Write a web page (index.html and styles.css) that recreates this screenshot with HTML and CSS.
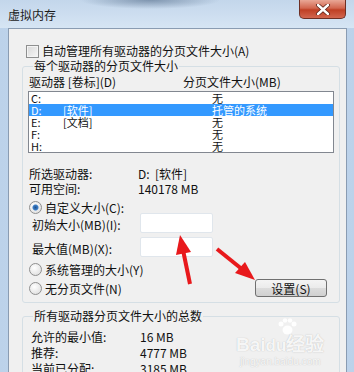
FILE: index.html
```html
<!DOCTYPE html>
<html lang="zh-CN">
<head>
    <meta charset="UTF-8">
    <title>虚拟内存</title>
    <link rel="stylesheet" href="styles.css">
</head>
<body>

    <div class="window">
        <div class="titlebar">
            <span class="title">虚拟内存</span>
            <div class="close-btn">
                <svg width="16" height="11" viewBox="0 0 16 11">
                    <path d="M3 1 L13 10 M13 1 L3 10" stroke="#5a2016" stroke-width="4" stroke-linecap="round"/>
                    <path d="M3 1 L13 10 M13 1 L3 10" stroke="#ffffff" stroke-width="2.4" stroke-linecap="round"/>
                </svg>
            </div>
        </div>

        <div class="content">
            <div class="check-row">
                <span class="checkbox"></span>
                <span>自动管理所有驱动器的分页文件大小(A)</span>
            </div>

            <!-- 每个驱动器 -->
            <fieldset class="group">
                <legend>每个驱动器的分页文件大小</legend>
                <div class="list-head">
                    <span>驱动器 [卷标](D)</span>
                    <span>分页文件大小(MB)</span>
                </div>
                <div class="listbox">
                    <div class="list-row"><span>C:</span><span></span><span>无</span></div>
                    <div class="list-row selected"><span>D:</span><span>[软件]</span><span>托管的系统</span></div>
                    <div class="list-row"><span>E:</span><span>[文档]</span><span>无</span></div>
                    <div class="list-row"><span>F:</span><span></span><span>无</span></div>
                    <div class="list-row"><span>H:</span><span></span><span>无</span></div>
                </div>

                <div class="info-rows">
                    <div class="info-row"><span>所选驱动器:</span><span>D:  [软件]</span></div>
                    <div class="info-row"><span>可用空间:</span><span>140178 MB</span></div>
                </div>

                <div class="radio-row first">
                    <span class="radio checked"></span>
                    <span>自定义大小(C):</span>
                </div>
                <div class="input-row initial">
                    <span>初始大小(MB)(I):</span>
                    <span class="textbox"></span>
                </div>
                <div class="input-row">
                    <span>最大值(MB)(X):</span>
                    <span class="textbox"></span>
                </div>
                <div class="radio-row system">
                    <span class="radio"></span>
                    <span>系统管理的大小(Y)</span>
                </div>
                <div class="radio-row last">
                    <div class="radio-label">
                        <span class="radio"></span>
                        <span>无分页文件(N)</span>
                    </div>
                    <button class="set-btn">设置(S)</button>
                </div>
            </fieldset>

            <!-- 总数 -->
            <fieldset class="group total">
                <legend>所有驱动器分页文件大小的总数</legend>
                <div class="total-row"><span>允许的最小值:</span><span>16 MB</span></div>
                <div class="total-row"><span>推荐:</span><span>4777 MB</span></div>
                <div class="total-row"><span>当前已分配:</span><span>3185 MB</span></div>
            </fieldset>
        </div>

        <div class="watermark">
            <svg class="wm-paw" width="22" height="18" viewBox="0 0 22 18">
                <circle cx="5" cy="6" r="2.5" fill="rgba(255,255,255,0.9)"/>
                <circle cx="9" cy="2.5" r="2.3" fill="rgba(255,255,255,0.9)"/>
                <circle cx="14" cy="2.5" r="2.3" fill="rgba(255,255,255,0.9)"/>
                <circle cx="18" cy="6" r="2.5" fill="rgba(255,255,255,0.9)"/>
                <ellipse cx="11.5" cy="12" rx="5" ry="4.5" fill="rgba(255,255,255,0.9)"/>
            </svg>
            <div class="wm-logo">Bai<span class="wm-du">du</span>经验</div>
            <div class="wm-url">jingyan.baidu.com</div>
        </div>

        <svg class="arrows" width="354" height="372" viewBox="0 0 354 372">
            <line x1="190" y1="284" x2="183" y2="250" stroke="#e8191c" stroke-width="4"/>
            <polygon points="180,235 191,252 176,255" fill="#e8191c"/>
            <line x1="217" y1="249" x2="243" y2="270" stroke="#e8191c" stroke-width="4"/>
            <polygon points="255,280 245,262 235,273" fill="#e8191c"/>
        </svg>
    </div>

</body>
</html>
```

FILE: styles.css
```css
body {
    margin: 0;
    font-family: "Noto Sans CJK SC", "Liberation Sans", sans-serif;
    font-size: 12px;
    color: #111;
    overflow: hidden;
}

.window {
    position: relative;
    width: 354px;
    height: 372px;
    padding: 0 7px 0 8px;
    box-sizing: border-box;
    background: linear-gradient(to right, #bcd2ea, #cfe0f2 50%, #bcd2ea);
    overflow: hidden;
}

.titlebar {
    display: flex;
    align-items: flex-start;
    justify-content: space-between;
    height: 28px;
    margin: 0 -7px 0 -8px;
    padding: 0 7px 0 8px;
    background:
        radial-gradient(ellipse 70px 9px at 150px 0, rgba(70, 95, 125, 0.55), transparent),
        linear-gradient(#c3d6eb, #d6e5f4);
}

.title {
    line-height: 30px;
    color: #1b1b1b;
}

.close-btn {
    display: flex;
    align-items: center;
    justify-content: center;
    width: 45px;
    height: 18px;
    margin-right: 1px;
    border: 1px solid #6e2f24;
    border-top: none;
    border-radius: 0 0 5px 5px;
    background: linear-gradient(#e9a796, #d2664f 45%, #bf3f24 55%, #d2664f);
}

.content {
    height: 400px;
    border: 1px solid #8a9cb2;
    border-bottom: none;
    background: #f0f0f0;
    padding-top: 15px;
}

.check-row {
    display: flex;
    align-items: center;
    height: 14px;
    line-height: 14px;
    padding-left: 17px;
    gap: 3px;
}

.checkbox {
    width: 11px;
    height: 11px;
    border: 1px solid #8e8f8f;
    background: linear-gradient(135deg, #d8d8d8, #f7f7f7);
    box-shadow: inset 0 0 0 1px #f4f4f4;
}

.group {
    margin: 0 6px 0 13px;
    padding: 0 5px 5px 5px;
    border: 1px solid #d5dfe5;
    border-radius: 3px;
    min-width: 0;
}

.group legend {
    padding: 0 1px;
    margin-left: 5px;
    line-height: 16px;
}

.list-head {
    display: grid;
    grid-template-columns: 154px 1fr;
    height: 14px;
    line-height: 14px;
    margin-top: 1px;
    padding-left: 1px;
    margin-bottom: 2px;
}

.listbox {
    height: 60px;
    border: 1px solid #828790;
    background: #fff;
    overflow: hidden;
}

.list-row {
    display: grid;
    grid-template-columns: 32px 149px 1fr;
    height: 12px;
    line-height: 12px;
    padding-left: 2px;
    font-size: 11px;
}

.list-row.selected {
    background: #3399ff;
    color: #fff;
}

.info-rows {
    margin-top: 13px;
    padding-left: 1px;
}

.info-row {
    display: grid;
    grid-template-columns: 109px 1fr;
    height: 15px;
    line-height: 15px;
    white-space: pre;
}

.radio-row {
    display: flex;
    align-items: center;
    height: 15px;
    line-height: 15px;
    padding-left: 1px;
    gap: 3px;
}

.radio-row.first {
    margin-top: 4px;
}

.radio-row.system {
    margin-top: 5px;
}

.radio-row.last {
    justify-content: space-between;
    height: 18px;
    margin-top: 2px;
}

.radio-label {
    display: flex;
    align-items: center;
    gap: 3px;
}

.radio {
    width: 11px;
    height: 11px;
    border: 1px solid #8f8f8f;
    border-radius: 50%;
    background: radial-gradient(circle at 40% 35%, #ffffff, #d9d9d9);
}

.radio.checked {
    background:
        radial-gradient(circle, #1f4f8c 0, #3c7fc8 2.5px, transparent 3.5px),
        radial-gradient(circle at 40% 35%, #ffffff, #d9d9d9);
}

.input-row {
    display: grid;
    grid-template-columns: 108px 73px;
    align-items: center;
    height: 20px;
    padding-left: 4px;
    margin-top: 4px;
}

.input-row.initial {
    margin-top: -2px;
}

.input-row span:first-child {
    padding-top: 3px;
}

.textbox {
    height: 18px;
    border: 1px solid #e0e6ec;
    border-radius: 2px;
    background: #fff;
}

.set-btn {
    width: 72px;
    height: 18px;
    margin-right: 7px;
    padding: 0;
    font-family: inherit;
    font-size: 12px;
    color: #111;
    border: 1px solid #707070;
    border-radius: 3px;
    background: linear-gradient(#f4f4f4, #ebebeb 50%, #dcdcdc 51%, #d0d0d0);
}

.group.total {
    margin-top: 5px;
    padding-top: 5px;
}

.total-row {
    display: grid;
    grid-template-columns: 109px 1fr;
    height: 16px;
    line-height: 16px;
    padding-left: 3px;
}

.watermark {
    position: absolute;
    left: 236px;
    top: 318px;
    color: rgba(255, 255, 255, 0.9);
    text-shadow: 0 0 1px rgba(140, 140, 140, 0.6);
}

.wm-paw {
    display: block;
    margin-left: 40px;
}

.wm-logo {
    font-family: "Liberation Sans", sans-serif;
    font-size: 19px;
    font-weight: bold;
    line-height: 18px;
}

.wm-du {
    font-size: 17px;
}

.wm-url {
    font-family: "Liberation Sans", sans-serif;
    font-size: 10px;
    line-height: 14px;
    padding-left: 4px;
}

.arrows {
    position: absolute;
    left: 0;
    top: 0;
}
```
